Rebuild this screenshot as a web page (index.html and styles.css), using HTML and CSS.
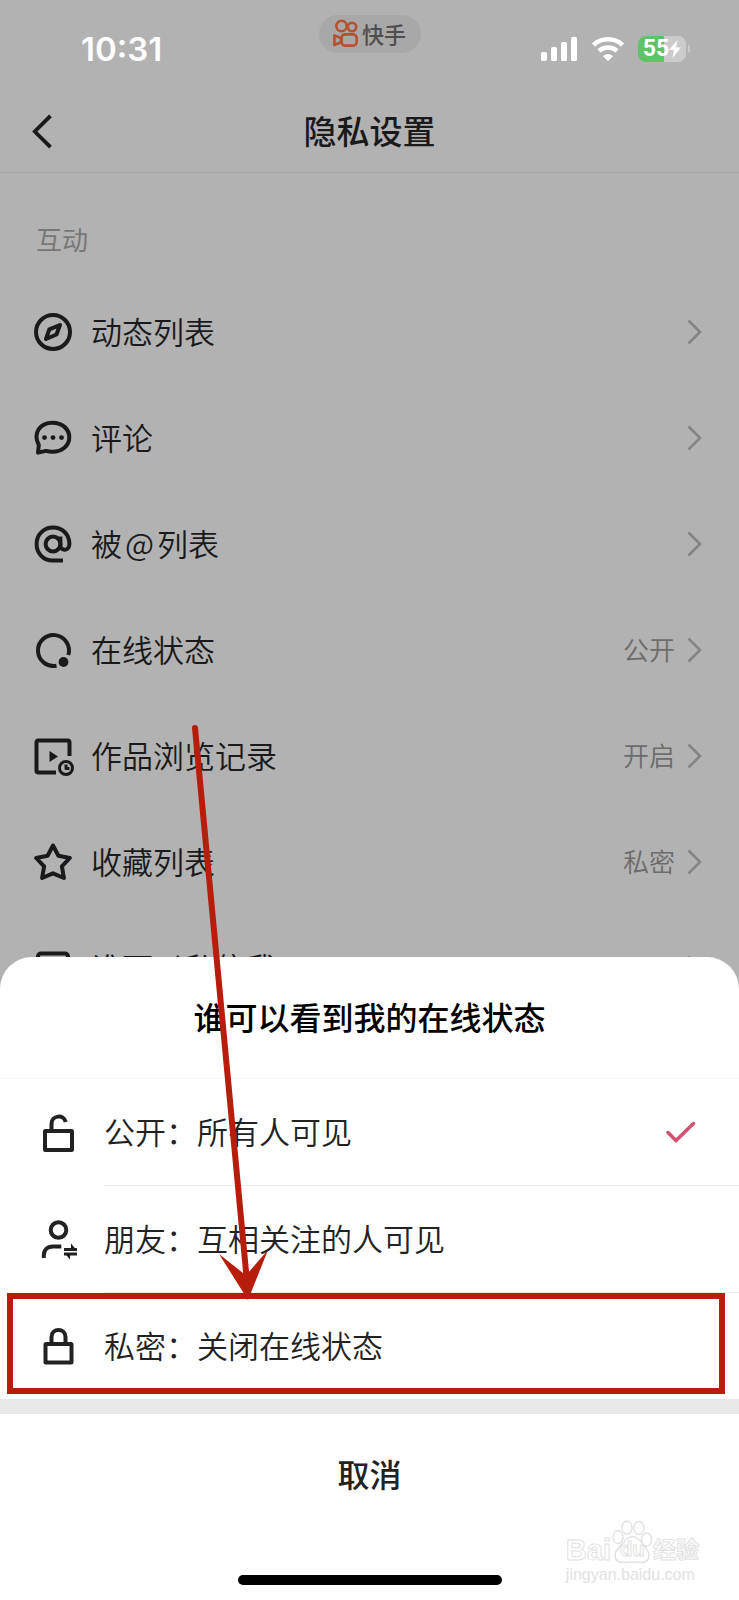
FILE: index.html
```html
<!DOCTYPE html>
<html lang="zh-CN">
<head>
    <meta charset="UTF-8">
    <meta name="viewport" content="width=device-width, initial-scale=1.0">
    <title>隐私设置</title>
    <link rel="stylesheet" href="styles.css">
</head>
<body>

    <!-- Status Bar -->
    <div class="status-bar">
        <div class="status-time">10:31</div>
        <div class="app-pill">
            <svg class="app-logo" width="25" height="28" viewBox="0 0 25 28" fill="none" stroke="#b5512f" stroke-width="2.6">
                <circle cx="8.5" cy="7" r="5.2"/>
                <circle cx="19" cy="8" r="4.2"/>
                <rect x="8.6" y="15.4" width="15" height="11.2" rx="3.4"/>
                <path d="M1.4 16.4v9.6l6.500-2.800v-4z" stroke-linejoin="round"/>
            </svg>
            <span>快手</span>
        </div>
        <div class="status-icons">
            <svg width="37" height="24" viewBox="0 0 37 24" fill="#fff">
                <rect x="0" y="15" width="6" height="9" rx="1.6"/>
                <rect x="10" y="10" width="6" height="14" rx="1.6"/>
                <rect x="20" y="5" width="6" height="19" rx="1.6"/>
                <rect x="30" y="0" width="6" height="24" rx="1.6"/>
            </svg>
            <svg width="32" height="24" viewBox="0 0 32 24">
                <path d="M1.500 8C9.500 .4 22.500 .4 30.500 8M7 14c5-4.600 13-4.600 18 0" fill="none" stroke="#fff" stroke-width="4.600"/>
                <path d="M16 24l-5-4.800c2.900-2.600 7.100-2.600 10 0z" fill="#fff"/>
            </svg>
            <div class="battery">
                <span class="battery-level">55</span>
                <svg width="12" height="18" viewBox="0 0 12 18" fill="#fff">
                    <path d="M8.500 0L0 10h5L3.500 18 12 7.500H7z"/>
                </svg>
            </div>
        </div>
    </div>

    <!-- Navigation -->
    <div class="navbar">
        <button class="back-btn" aria-label="返回">
            <svg width="20" height="36" viewBox="0 0 20 36" fill="none" stroke="#1a1a1c" stroke-width="3.800">
                <path d="M18.500 1.800L2.800 17.500l15.700 15.700"/>
            </svg>
        </button>
        <h1>隐私设置</h1>
    </div>

    <!-- Settings List -->
    <h2 class="section-title">互动</h2>
    <div class="settings">
        <a class="row" href="#">
            <svg class="row-icon" viewBox="0 0 40 40">
                <circle cx="19" cy="20" r="17"/>
                <path d="M26 13l-3.500 9.500-10.500 4.500 3.300-9.700z"/>
            </svg>
            <span class="row-label">动态列表</span>
            <svg class="arrow" viewBox="0 0 16 26"><path d="M1.500 1.500L13 13 1.500 24.500"/></svg>
        </a>
        <a class="row" href="#">
            <svg class="row-icon" viewBox="0 0 40 40">
                <path d="M4 34.600l.8-7.600C-1.500 15 6 4.800 18.500 4.800c9.500 0 16.800 6 16.800 14.500 0 8.700-7.500 14.500-16.800 14.500-2.500 0-4.500-.3-6.500-.9z"/>
                <g class="solid"><circle cx="10.500" cy="19.600" r="2.400"/><circle cx="19" cy="19.600" r="2.400"/><circle cx="27.500" cy="19.600" r="2.400"/></g>
            </svg>
            <span class="row-label">评论</span>
            <svg class="arrow" viewBox="0 0 16 26"><path d="M1.500 1.500L13 13 1.500 24.500"/></svg>
        </a>
        <a class="row" href="#">
            <svg class="row-icon" viewBox="0 0 40 40">
                <circle cx="19" cy="20" r="7.400"/>
                <path d="M26.400 12.500v9c0 6 9 6 9-1.500C35.400 10 28 3.500 19 3.500S2.600 10.500 2.600 20 9.500 36.500 18.500 36.500h10.500"/>
            </svg>
            <span class="row-label">被<span class="at">@</span>列表</span>
            <svg class="arrow" viewBox="0 0 16 26"><path d="M1.500 1.500L13 13 1.500 24.500"/></svg>
        </a>
        <a class="row" href="#">
            <svg class="row-icon" viewBox="0 0 40 40">
                <path d="M22.500 35.700A15.500 15.500 0 1 1 34.300 25"/>
                <circle class="solid" cx="29.500" cy="32" r="4.900"/>
            </svg>
            <span class="row-label">在线状态</span>
            <span class="row-value">公开</span>
            <svg class="arrow" viewBox="0 0 16 26"><path d="M1.500 1.500L13 13 1.500 24.500"/></svg>
        </a>
        <a class="row" href="#">
            <svg class="row-icon" viewBox="0 0 40 40">
                <path d="M35.500 20V6.500a2 2 0 0 0-2-2h-29a2 2 0 0 0-2 2v28a2 2 0 0 0 2 2h17.500"/>
                <path class="solid" d="M15.500 15v11l8.500-5.500z"/>
                <circle class="thin" cx="32" cy="32" r="6.500"/>
                <path class="thin" d="M32 28.500v4h3.500"/>
            </svg>
            <span class="row-label">作品浏览记录</span>
            <span class="row-value">开启</span>
            <svg class="arrow" viewBox="0 0 16 26"><path d="M1.500 1.500L13 13 1.500 24.500"/></svg>
        </a>
        <a class="row" href="#">
            <svg class="row-icon" viewBox="0 0 40 40">
                <path d="M19 3.500l5.400 10.300 11.400 2.200-7.900 8.400 2 11.600L19 31.300 8.100 36l2-11.600L2.200 16l11.400-2.200z"/>
            </svg>
            <span class="row-label">收藏列表</span>
            <span class="row-value">私密</span>
            <svg class="arrow" viewBox="0 0 16 26"><path d="M1.500 1.500L13 13 1.500 24.500"/></svg>
        </a>
        <a class="row" href="#">
            <svg class="row-icon" viewBox="0 0 40 40">
                <rect x="4" y="5.500" width="30" height="30" rx="3"/>
            </svg>
            <span class="row-label">谁可以私信我</span>
            <svg class="arrow" viewBox="0 0 16 26"><path d="M1.500 1.500L13 13 1.500 24.500"/></svg>
        </a>
    </div>

    <!-- Bottom Sheet -->
    <div class="sheet">
        <h2 class="sheet-title">谁可以看到我的在线状态</h2>
        <div class="options">
            <label class="option">
                <svg class="option-icon" viewBox="0 0 40 40">
                    <rect x="7" y="18" width="27" height="19" rx="0.500"/>
                    <path d="M13.500 18V11c0-9 12.500-10 14.200-2"/>
                </svg>
                <span class="option-body">
                    <span class="option-label">公开：所有人可见</span>
                    <input type="radio" name="visibility" checked>
                    <svg class="check" width="30" height="22" viewBox="0 0 30 22"><path d="M2 11.500l8 8L27.500 2.500"/></svg>
                </span>
            </label>
            <label class="option">
                <svg class="option-icon" viewBox="0 0 40 40">
                    <circle cx="20.500" cy="10" r="7.800"/>
                    <path d="M5.800 38v-2.500c0-5.500 3.500-9 9-9h8.500"/>
                    <path class="thin" d="M26 29.500h13M26 34h13"/>
                    <path class="solid" d="M33 23.500l5 6h-5zM32 39.500l-5-6h5z"/>
                </svg>
                <span class="option-body">
                    <span class="option-label">朋友：互相关注的人可见</span>
                    <input type="radio" name="visibility">
                    <svg class="check" width="30" height="22" viewBox="0 0 30 22"><path d="M2 11.500l8 8L27.500 2.500"/></svg>
                </span>
            </label>
            <label class="option marked">
                <svg class="option-icon" viewBox="0 0 40 40">
                    <rect x="7.500" y="18" width="26" height="18.500" rx="0.500"/>
                    <path d="M13.500 18V11c0-9.500 14-9.500 14 0v7"/>
                </svg>
                <span class="option-body">
                    <span class="option-label">私密：关闭在线状态</span>
                    <input type="radio" name="visibility">
                    <svg class="check" width="30" height="22" viewBox="0 0 30 22"><path d="M2 11.500l8 8L27.500 2.500"/></svg>
                </span>
            </label>
        </div>
        <button class="cancel-btn">取消</button>
        <div class="home-indicator"></div>

        <!-- Pointer to the private option -->
        <svg class="pointer" width="90" height="580" viewBox="0 0 90 580">
            <path d="M10 6L62 560" fill="none" stroke="#b81c0a" stroke-width="6" stroke-linecap="round"/>
            <path d="M34 532l24 19h5l20-23-20 50z" fill="#b81c0a"/>
        </svg>

        <!-- Watermark -->
        <div class="watermark">
            <div class="watermark-logo">
                <span>Bai</span>
                <span class="paw">
                    <svg width="40" height="44" viewBox="0 0 40 44" fill="#fff" stroke="#e2e2e2" stroke-width="1.500">
                        <ellipse cx="6" cy="17" rx="5" ry="6.500"/>
                        <ellipse cx="15" cy="7.500" rx="5" ry="6.500"/>
                        <ellipse cx="27" cy="8" rx="5" ry="6.500"/>
                        <ellipse cx="34.500" cy="19.500" rx="5" ry="6.500"/>
                        <path d="M12 22c5-7 12-7 17 0 3 4 8 8 8 13 0 6-4 8-9 7.500-5-.6-10-.6-15 0C7 43 3 41 3 35c0-5 6-9 9-13z"/>
                    </svg>
                    <em>du</em>
                </span>
                <span class="watermark-cn">经验</span>
            </div>
            <div class="watermark-url">jingyan.baidu.com</div>
        </div>
    </div>

</body>
</html>
```
FILE: styles.css
```css
* {
    margin: 0;
    padding: 0;
    box-sizing: border-box;
}

body {
    position: relative;
    min-height: 100vh;
    overflow: hidden;
    background-color: #b2b2b2;
    color: #1a1a1c;
    font-family: "Inter", "Noto Sans CJK SC", sans-serif;
}

button {
    background: none;
    border: none;
    font-family: inherit;
    cursor: pointer;
}

/* Status Bar */
.status-bar {
    display: grid;
    grid-template-columns: 1fr 102px 1fr;
    align-items: start;
    height: 91px;
    padding-top: 15px;
    color: #fff;
}

.status-time {
    margin-top: 14px;
    padding-left: 81px;
    font-size: 33px;
    font-weight: 600;
    line-height: 40px;
}

.app-pill {
    display: flex;
    align-items: center;
    justify-content: center;
    gap: 4px;
    height: 38px;
    padding-bottom: 2px;
    border-radius: 19px;
    background-color: #a8a8a8;
    color: #4e4e4e;
    font-size: 22px;
    font-weight: 500;
}

.status-icons {
    display: flex;
    align-items: center;
    justify-content: flex-end;
    gap: 14px;
    margin-top: 21px;
    padding-right: 53px;
}

.battery {
    display: flex;
    align-items: center;
    justify-content: center;
    position: relative;
    width: 48px;
    height: 26px;
    border-radius: 8px;
    background: linear-gradient(to right, #5fc264 54%, #cbcbcb 54%);
}

.battery::after {
    content: "";
    position: absolute;
    top: 9px;
    right: -4px;
    width: 2px;
    height: 8px;
    border-radius: 0 2px 2px 0;
    background-color: #cbcbcb;
}

.battery-level {
    font-family: Roboto, sans-serif;
    font-size: 23px;
    font-weight: 700;
    line-height: 26px;
}

/* Navigation */
.navbar {
    display: grid;
    grid-template-columns: 60px 1fr 60px;
    align-items: center;
    height: 82px;
    border-bottom: 1px solid #a6a6a6;
}

.back-btn {
    display: flex;
    padding-left: 32px;
}

.navbar h1 {
    padding-bottom: 4px;
    text-align: center;
    font-size: 33px;
    font-weight: 500;
}

/* Settings List */
.section-title {
    padding: 48px 36px 18px;
    color: #777;
    font-size: 26px;
    font-weight: 400;
    line-height: 40px;
}

.row {
    display: flex;
    align-items: center;
    height: 106px;
    padding: 0 36px 0 34px;
    color: inherit;
    text-decoration: none;
}

.row-icon,
.option-icon {
    flex: none;
    width: 40px;
    height: 40px;
    fill: none;
    stroke: #1a1a1c;
    stroke-width: 4;
    stroke-linejoin: round;
}

.option-icon {
    stroke: #222;
}

.solid {
    fill: #1a1a1c;
    stroke: none;
}

.thin {
    stroke-width: 3;
}

.row-label,
.option-label {
    flex: 1;
    padding-bottom: 4px;
    font-family: "Noto Sans CJK SC", sans-serif;
    font-size: 31px;
    font-weight: 350;
}

.row-label {
    margin-left: 17px;
}

.at {
    margin: 0 3px;
}

.row-value {
    margin-right: 12px;
    padding-bottom: 3px;
    color: #6c6c6c;
    font-size: 26px;
    font-weight: 350;
}

.arrow {
    width: 16px;
    height: 26px;
    fill: none;
    stroke: #838383;
    stroke-width: 2.5;
}

/* Bottom Sheet */
.sheet {
    position: absolute;
    left: 0;
    right: 0;
    bottom: 0;
    border-radius: 32px 32px 0 0;
    background-color: #fff;
    color: #222;
}

.sheet-title {
    padding: 38px 20px 35px;
    border-bottom: 1px solid #f5f5f5;
    color: #000;
    text-align: center;
    font-size: 32px;
    font-weight: 500;
    line-height: 48px;
}

.options {
    border-bottom: 15px solid #e8e8e8;
}

.option {
    display: flex;
    align-items: center;
    position: relative;
    height: 107px;
    padding-left: 38px;
    cursor: pointer;
}

.option:last-child {
    height: 106px;
}

.option-body {
    display: flex;
    align-items: center;
    flex: 1;
    align-self: stretch;
    margin-left: 26px;
    padding-right: 43px;
    border-bottom: 1px solid #ececec;
}

.option:last-child .option-body {
    border-bottom: none;
}

.option input {
    appearance: none;
}

.check {
    display: none;
    fill: none;
    stroke: #d3506f;
    stroke-width: 3.5;
    stroke-linecap: round;
}

.option input:checked + .check {
    display: block;
}

/* Red frame round the option */
.marked::after {
    content: "";
    position: absolute;
    inset: 0 14px 5px 7px;
    border: 6px solid #b81c0a;
}

.pointer {
    position: absolute;
    top: -235px;
    left: 185px;
}

.cancel-btn {
    display: block;
    width: 100%;
    padding: 38px 0 75px;
    color: #222;
    font-size: 32px;
    font-weight: 500;
    line-height: 48px;
}

.home-indicator {
    width: 264px;
    height: 10px;
    margin: 0 auto 15px;
    border-radius: 5px;
    background-color: #000;
}

/* Watermark */
.watermark {
    position: absolute;
    right: 40px;
    bottom: 14px;
    color: #fff;
    font-family: "Liberation Sans", "Noto Sans CJK SC", sans-serif;
    -webkit-text-stroke: 1px #e2e2e2;
}

.watermark-logo {
    display: flex;
    align-items: flex-end;
    gap: 1px;
    font-size: 29px;
    font-weight: 700;
    line-height: 28px;
}

.paw {
    position: relative;
    height: 44px;
}

.paw em {
    position: absolute;
    left: 8px;
    bottom: 1px;
    font-size: 20px;
    font-style: normal;
}

.watermark-cn {
    font-size: 23px;
}

.watermark-url {
    color: #e2e2e2;
    font-size: 16px;
    line-height: 22px;
    -webkit-text-stroke: 0;
}
```
